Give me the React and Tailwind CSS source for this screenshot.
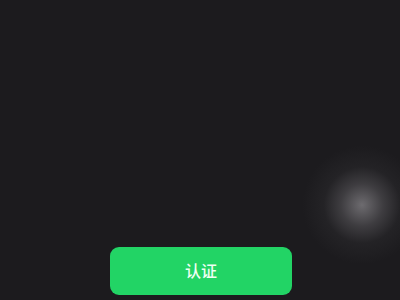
export default function App() {
  return (
    <div className="relative h-[300px] w-[400px] overflow-hidden bg-[#1c1b1e] font-['Noto_Sans','Noto_Sans_CJK_SC',sans-serif]">
      {/* floating blurred glow */}
      <div className="pointer-events-none absolute left-[302px] top-[145px] h-[120px] w-[120px] rounded-full bg-[radial-gradient(circle,rgba(118,116,120,0.9)_0%,rgba(90,88,92,0.55)_25%,rgba(50,49,52,0.35)_45%,rgba(28,27,30,0)_70%)]" />

      <div className="flex h-full flex-col justify-end items-center pb-[5px] pl-[2px]">
        <button className="h-[48px] w-[182px] rounded-[9px] bg-[#22d465] text-[16px] font-medium text-[#effff4]">
          认证
        </button>
      </div>
    </div>
  )
}
